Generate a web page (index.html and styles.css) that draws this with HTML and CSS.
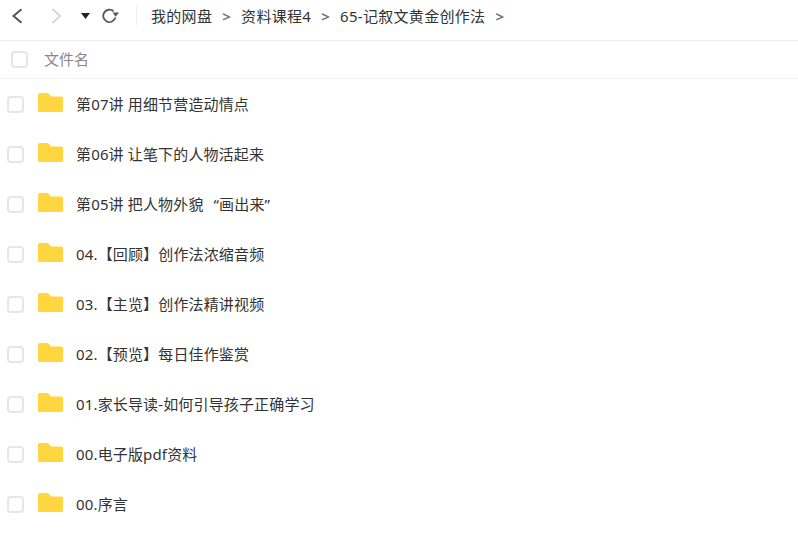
FILE: index.html
```html
<!DOCTYPE html>
<html lang="zh-CN">
<head>
    <meta charset="UTF-8">
    <meta name="viewport" content="width=device-width, initial-scale=1.0">
    <title>我的网盘</title>

    <link rel="stylesheet" href="styles.css">
</head>
<body>
    <div class="toolbar">
        <div class="nav-btns">
            <svg class="nav-icon" width="12" height="16" viewBox="0 0 12 16"><path d="M10.5 1.2 L2.5 8 L10.5 14.8" fill="none" stroke="#555" stroke-width="2"/></svg>
            <svg class="nav-icon next" width="12" height="16" viewBox="0 0 12 16"><path d="M2.5 1 L10 8 L2.5 15" fill="none" stroke="#ccc" stroke-width="1.6"/></svg>
            <svg class="nav-icon drop" width="9" height="6" viewBox="0 0 9 6"><path d="M0 0 H9 L4.5 6 Z" fill="#222"/></svg>
            <svg class="nav-icon" width="18" height="16" viewBox="0 0 18 16"><path d="M13.4 9.6 A6.2 6.2 0 1 1 11.6 3.3" fill="none" stroke="#555" stroke-width="1.8"/><path d="M10.5 4.5 H17 L13.7 8.8 Z" fill="#555"/></svg>
        </div>
        <div class="crumbs">
            <span>我的网盘</span>
            <span class="sep">&gt;</span>
            <span>资料课程4</span>
            <span class="sep">&gt;</span>
            <span>65-记叙文黄金创作法</span>
            <span class="sep">&gt;</span>
        </div>
    </div>

    <div class="list-head">
        <span class="check"></span>
        <span class="head-name">文件名</span>
    </div>

    <ul class="file-list">
        <li class="file-row"><span class="check"></span><svg class="folder" width="25" height="19" viewBox="0 0 25 19"><use href="#folder-shape"/></svg><span class="file-name">第07讲 用细节营造动情点</span></li>
        <li class="file-row"><span class="check"></span><svg class="folder" width="25" height="19" viewBox="0 0 25 19"><use href="#folder-shape"/></svg><span class="file-name">第06讲 让笔下的人物活起来</span></li>
        <li class="file-row"><span class="check"></span><svg class="folder" width="25" height="19" viewBox="0 0 25 19"><use href="#folder-shape"/></svg><span class="file-name">第05讲 把人物外貌<span class="quote-open">“</span>画出来<span class="quote-close">”</span></span></li>
        <li class="file-row"><span class="check"></span><svg class="folder" width="25" height="19" viewBox="0 0 25 19"><use href="#folder-shape"/></svg><span class="file-name">04.【回顾】创作法浓缩音频</span></li>
        <li class="file-row"><span class="check"></span><svg class="folder" width="25" height="19" viewBox="0 0 25 19"><use href="#folder-shape"/></svg><span class="file-name">03.【主览】创作法精讲视频</span></li>
        <li class="file-row"><span class="check"></span><svg class="folder" width="25" height="19" viewBox="0 0 25 19"><use href="#folder-shape"/></svg><span class="file-name">02.【预览】每日佳作鉴赏</span></li>
        <li class="file-row"><span class="check"></span><svg class="folder" width="25" height="19" viewBox="0 0 25 19"><use href="#folder-shape"/></svg><span class="file-name">01.家长导读-如何引导孩子正确学习</span></li>
        <li class="file-row"><span class="check"></span><svg class="folder" width="25" height="19" viewBox="0 0 25 19"><use href="#folder-shape"/></svg><span class="file-name">00.电子版pdf资料</span></li>
        <li class="file-row"><span class="check"></span><svg class="folder" width="25" height="19" viewBox="0 0 25 19"><use href="#folder-shape"/></svg><span class="file-name">00.序言</span></li>
    </ul>

    <svg width="0" height="0" class="defs">
        <defs>
            <path id="folder-shape" d="M0 1.5 Q0 0 1.5 0 H9 Q10 0 11 1 L13 3.5 H23.5 Q25 3.5 25 5 V17.5 Q25 19 23.5 19 H1.5 Q0 19 0 17.5 Z" fill="#ffd640"/>
        </defs>
    </svg>
</body>
</html>
```

FILE: styles.css
```css
body {
    margin: 0;
    padding: 0;
    font-family: "Noto Sans", "Noto Sans CJK SC", sans-serif;
    font-size: 15px;
    color: #333;
    background-color: #fff;
    height: 556px;
    overflow: hidden;
}

.toolbar {
    display: flex;
    align-items: flex-start;
    height: 35px;
    padding-top: 5px;
    border-bottom: 1px solid #f0f0f0;
}

.nav-btns {
    display: flex;
    align-items: center;
    width: 137px;
    height: 21px;
    border-right: 1px solid #eee;
    padding-left: 11px;
    box-sizing: border-box;
}

.nav-icon {
    flex: none;
}

.nav-icon.next {
    margin-left: 27px;
}

.nav-icon.drop {
    margin-left: 19px;
    margin-right: 12px;
}

.crumbs {
    display: flex;
    align-items: center;
    height: 21px;
    padding-left: 14px;
    color: #333;
    letter-spacing: 0.3px;
}

.sep {
    margin: 0 10px;
    color: #777;
    font-weight: bold;
}

.list-head {
    display: flex;
    align-items: center;
    height: 37px;
    border-bottom: 1px solid #f2f2f2;
    padding-left: 11px;
}

.head-name {
    margin-left: 16px;
    margin-top: -2px;
    color: #888;
}

.file-list {
    list-style: none;
    margin: 0;
    padding: 0;
}

.file-row {
    display: flex;
    align-items: center;
    height: 50px;
    padding-left: 7px;
}

.check {
    display: block;
    flex: none;
    width: 13px;
    height: 13px;
    border: 2px solid #e6e6e6;
    border-radius: 4px;
    background-color: #fff;
}

.folder {
    flex: none;
    margin-left: 14px;
    margin-top: -3px;
}

.file-name {
    margin-left: 13px;
    margin-top: -2px;
    letter-spacing: 0.15px;
}

.quote-open {
    margin-left: 10px;
}

.quote-close {
    margin-right: 7px;
}

.defs {
    position: absolute;
}
```
